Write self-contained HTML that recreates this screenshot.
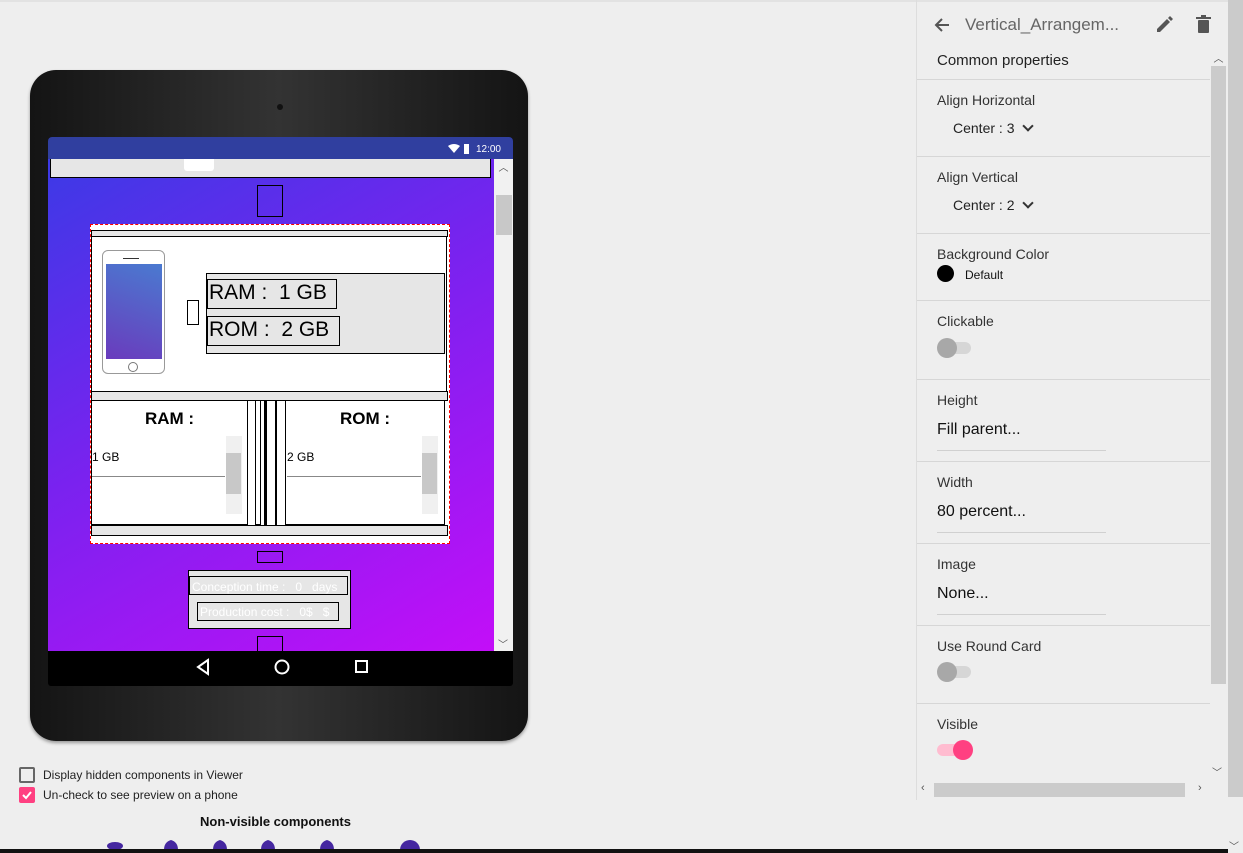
<!DOCTYPE html>
<html><head><meta charset="utf-8"><style>
*{box-sizing:border-box;margin:0;padding:0}
body{width:1243px;height:853px;background:#eeeeee;font-family:"Liberation Sans",sans-serif;position:relative;overflow:hidden;color:#222}
.a{position:absolute}
.b{position:absolute;border:1px solid #000}
.lbl{position:absolute;left:937px;font-size:14px;color:#333}
.val{position:absolute;left:937px;font-size:16px;color:#111}
.hr{position:absolute;left:917px;width:293px;height:1px;background:#d6d6d6}
.ul{position:absolute;left:937px;width:169px;height:1px;background:#d0d0d0}
.chev{display:inline-block;width:8px;height:8px;border-right:2px solid #333;border-bottom:2px solid #333;transform:rotate(45deg);margin-left:10px;position:relative;top:-3px}
</style></head><body>
<div class="a" style="left:0;top:0;width:1243px;height:2px;background:#e2e2e2"></div>
<!-- tablet -->
<div class="a" style="left:30px;top:70px;width:498px;height:671px;border-radius:26px;background:linear-gradient(90deg,#141414,#333 50%,#141414);box-shadow:0 2px 3px #999"></div>
<div class="a" style="left:277px;top:104px;width:6px;height:6px;border-radius:3px;background:#111"></div>
<div class="a" style="left:48px;top:137px;width:465px;height:549px;background:#000;border-radius:4px 4px 3px 3px"></div>
<div class="a" style="left:48px;top:137px;width:465px;height:22px;background:#303f9f;border-radius:4px 4px 0 0;color:#fff;font-size:10px;text-align:right;padding:7px 12px 0 0">12:00</div>
<svg class="a" style="left:447px;top:143px" width="28" height="12"><path d="M1 3 Q7 -1 13 3 L7 10Z" fill="#fff"/><rect x="17" y="1" width="5" height="10" fill="#fff"/></svg>
<div class="a" style="left:48px;top:159px;width:446px;height:492px;background:linear-gradient(150deg,#3c3ae6 0%,#7a22ef 45%,#c30ef8 100%)"></div>
<div class="a" style="left:494px;top:159px;width:19px;height:492px;background:#f1f1f1;font-size:10px;color:#555;text-align:center">︿</div>
<div class="a" style="left:496px;top:195px;width:16px;height:40px;background:#c8c8c8"></div>
<div class="a" style="left:498px;top:636px;font-size:10px;color:#555">﹀</div>
<div class="b" style="left:50px;top:159px;width:441px;height:19px;background:#e6e6e6;border-top:none"></div>
<div class="a" style="left:184px;top:159px;width:30px;height:12px;background:#fff;border-radius:0 0 3px 3px"></div>
<div class="b" style="left:257px;top:185px;width:26px;height:32px"></div>
<!-- arrangement -->
<div class="a" style="left:90px;top:224px;width:360px;height:320px;border:1px dashed #f00;background:#fff"></div>
<div class="b" style="left:91px;top:230px;width:357px;height:7px;background:#e6e6e6"></div>
<div class="b" style="left:91px;top:236px;width:356px;height:156px;background:#fff"></div>
<div class="a" style="left:102px;top:250px;width:63px;height:124px;border:1px solid #999;border-radius:6px;background:#fff"></div>
<div class="a" style="left:106px;top:264px;width:56px;height:95px;background:linear-gradient(200deg,#4a7ad0,#6a3bbd)"></div>
<div class="a" style="left:123px;top:258px;width:16px;height:1px;background:#333"></div>
<div class="a" style="left:128px;top:362px;width:10px;height:10px;border:1px solid #777;border-radius:50%"></div>
<div class="b" style="left:187px;top:300px;width:12px;height:25px"></div>
<div class="b" style="left:206px;top:273px;width:239px;height:81px;background:#e6e6e6"></div>
<div class="b" style="left:207px;top:279px;width:130px;height:30px;font-size:21px;padding:0 1px;line-height:26px;color:#000">RAM :&nbsp; 1 GB</div>
<div class="b" style="left:207px;top:316px;width:133px;height:30px;font-size:21px;padding:0 1px;line-height:26px;color:#000">ROM :&nbsp; 2 GB</div>
<div class="b" style="left:91px;top:391px;width:357px;height:10px;background:#e6e6e6"></div>
<div class="b" style="left:91px;top:400px;width:157px;height:125px;background:#fff;text-align:center;font-weight:bold;font-size:17px;padding-top:8px;color:#000">RAM :</div>
<div class="a" style="left:92px;top:450px;font-size:12px;color:#000">1 GB</div>
<div class="a" style="left:92px;top:476px;width:133px;height:1px;background:#888"></div>
<div class="a" style="left:226px;top:436px;width:16px;height:78px;background:#f0f0f0"></div>
<div class="a" style="left:226px;top:453px;width:15px;height:41px;background:#c8c8c8"></div>
<div class="b" style="left:255px;top:400px;width:6px;height:125px;background:#fff"></div>
<div class="a" style="left:264px;top:400px;width:3px;height:125px;background:#000"></div>
<div class="b" style="left:275px;top:400px;width:2px;height:125px;background:#fff"></div>
<div class="b" style="left:285px;top:400px;width:160px;height:125px;background:#fff;text-align:center;font-weight:bold;font-size:17px;padding-top:8px;color:#000">ROM :</div>
<div class="a" style="left:287px;top:450px;font-size:12px;color:#000">2 GB</div>
<div class="a" style="left:287px;top:476px;width:134px;height:1px;background:#888"></div>
<div class="a" style="left:422px;top:436px;width:16px;height:78px;background:#f0f0f0"></div>
<div class="a" style="left:422px;top:453px;width:15px;height:41px;background:#c8c8c8"></div>
<div class="b" style="left:91px;top:525px;width:357px;height:11px;background:#e6e6e6"></div>
<div class="b" style="left:257px;top:551px;width:26px;height:12px"></div>
<div class="b" style="left:188px;top:570px;width:163px;height:59px;background:#e6e6e6"></div>
<div class="b" style="left:189px;top:576px;width:159px;height:19px;color:#fff;font-size:12px;padding:3px 2px;white-space:nowrap;overflow:hidden">Conception time :&nbsp;&nbsp; 0 &nbsp; days</div>
<div class="b" style="left:197px;top:602px;width:142px;height:19px;color:#fff;font-size:12px;padding:2px 2px;white-space:nowrap;overflow:hidden">Production cost :&nbsp;&nbsp; 0$ &nbsp; $</div>
<div class="b" style="left:257px;top:636px;width:26px;height:16px;border-bottom:none"></div>
<svg class="a" style="left:190px;top:656px" width="190" height="22" fill="none" stroke="#fff" stroke-width="2"><path d="M18 4 L8 11 L18 18Z"/><circle cx="92" cy="11" r="6.5"/><rect x="166" y="5" width="11" height="11"/></svg>
<!-- checkboxes -->
<div class="a" style="left:19px;top:767px;width:16px;height:16px;border:2px solid #666;border-radius:2px"></div>
<div class="a" style="left:43px;top:768px;font-size:12px">Display hidden components in Viewer</div>
<div class="a" style="left:19px;top:787px;width:16px;height:16px;background:#ff4081;border-radius:2px"></div>
<svg class="a" style="left:19px;top:787px" width="16" height="16" fill="none" stroke="#fff" stroke-width="2"><path d="M4 8 L7 11 L12 5"/></svg>
<div class="a" style="left:43px;top:788px;font-size:12px">Un-check to see preview on a phone</div>
<div class="a" style="left:200px;top:814px;font-size:13px;font-weight:bold;color:#111">Non-visible components</div>
<svg class="a" style="left:100px;top:838px" width="330" height="12" fill="#4527a0"><ellipse cx="15" cy="8" rx="8" ry="4"/><path d="M64 12 Q64 4 71 2 Q78 4 78 12Z M113 12 Q113 4 120 2 Q127 4 127 12Z M161 12 Q161 4 168 2 Q175 4 175 12Z M220 12 Q220 4 227 2 Q234 4 234 12Z"/><circle cx="310" cy="12" r="10"/></svg>
<div class="a" style="left:0;top:849px;width:1228px;height:4px;background:#111"></div>
<!-- right panel -->
<div class="a" style="left:916px;top:0;width:1px;height:800px;background:#ddd"></div>
<svg class="a" style="left:933px;top:16px" width="18" height="18" fill="none" stroke="#555" stroke-width="2"><path d="M16 9 H3 M9 3 L3 9 L9 15"/></svg>
<div class="a" style="left:965px;top:15px;font-size:17px;color:#666">Vertical_Arrangem...</div>
<svg class="a" style="left:1155px;top:16px" width="18" height="18" fill="#555"><path d="M2 16 L2 13 L12 3 L15 6 L5 16Z M13 2 L15 0 L18 3 L16 5Z"/></svg>
<svg class="a" style="left:1196px;top:15px" width="16" height="18" fill="#555"><rect x="2" y="5" width="11" height="13" rx="1"/><rect x="0" y="2" width="15" height="2"/><rect x="5" y="0" width="5" height="2"/></svg>
<div class="a" style="left:1210px;top:50px;width:17px;height:747px;background:#eee;font-size:10px;text-align:center;color:#555">︿</div>
<div class="a" style="left:1211px;top:66px;width:15px;height:618px;background:#cbcbcb"></div>
<div class="a" style="left:1212px;top:764px;font-size:10px;color:#555">﹀</div>
<div class="a" style="left:1228px;top:0;width:15px;height:797px;background:#cbcbcb"></div>
<div class="a" style="left:1229px;top:838px;font-size:10px;color:#555">﹀</div>
<div class="a" style="left:917px;top:782px;width:293px;height:16px;background:#eee"></div>
<div class="a" style="left:934px;top:783px;width:251px;height:14px;background:#cbcbcb"></div>
<div class="a" style="left:921px;top:782px;font-size:11px;color:#555">‹</div>
<div class="a" style="left:1198px;top:782px;font-size:11px;color:#555">›</div>
<div class="a" style="left:937px;top:52px;font-size:15px;color:#222">Common properties</div>
<div class="hr" style="top:79px"></div>
<div class="lbl" style="top:92px">Align Horizontal</div>
<div class="a" style="left:953px;top:120px;font-size:14px">Center : 3<span class="chev"></span></div>
<div class="hr" style="top:156px"></div>
<div class="lbl" style="top:169px">Align Vertical</div>
<div class="a" style="left:953px;top:197px;font-size:14px">Center : 2<span class="chev"></span></div>
<div class="hr" style="top:233px"></div>
<div class="lbl" style="top:246px">Background Color</div>
<div class="a" style="left:937px;top:265px;width:17px;height:17px;border-radius:50%;background:#000"></div>
<div class="a" style="left:965px;top:268px;font-size:12px;color:#111">Default</div>
<div class="hr" style="top:300px"></div>
<div class="lbl" style="top:313px">Clickable</div>
<div class="a" style="left:941px;top:342px;width:30px;height:12px;border-radius:6px;background:#d6d6d6"></div>
<div class="a" style="left:937px;top:338px;width:20px;height:20px;border-radius:50%;background:#a8a8a8"></div>
<div class="hr" style="top:379px"></div>
<div class="lbl" style="top:392px">Height</div>
<div class="val" style="top:421px">Fill parent...</div>
<div class="ul" style="top:450px"></div>
<div class="hr" style="top:461px"></div>
<div class="lbl" style="top:474px">Width</div>
<div class="val" style="top:503px">80 percent...</div>
<div class="ul" style="top:532px"></div>
<div class="hr" style="top:543px"></div>
<div class="lbl" style="top:556px">Image</div>
<div class="val" style="top:585px">None...</div>
<div class="ul" style="top:614px"></div>
<div class="hr" style="top:625px"></div>
<div class="lbl" style="top:638px">Use Round Card</div>
<div class="a" style="left:941px;top:666px;width:30px;height:12px;border-radius:6px;background:#d6d6d6"></div>
<div class="a" style="left:937px;top:662px;width:20px;height:20px;border-radius:50%;background:#a8a8a8"></div>
<div class="hr" style="top:703px"></div>
<div class="lbl" style="top:716px">Visible</div>
<div class="a" style="left:937px;top:744px;width:30px;height:12px;border-radius:6px;background:#ffbcd0"></div>
<div class="a" style="left:953px;top:740px;width:20px;height:20px;border-radius:50%;background:#ff4081"></div>
</body></html>
